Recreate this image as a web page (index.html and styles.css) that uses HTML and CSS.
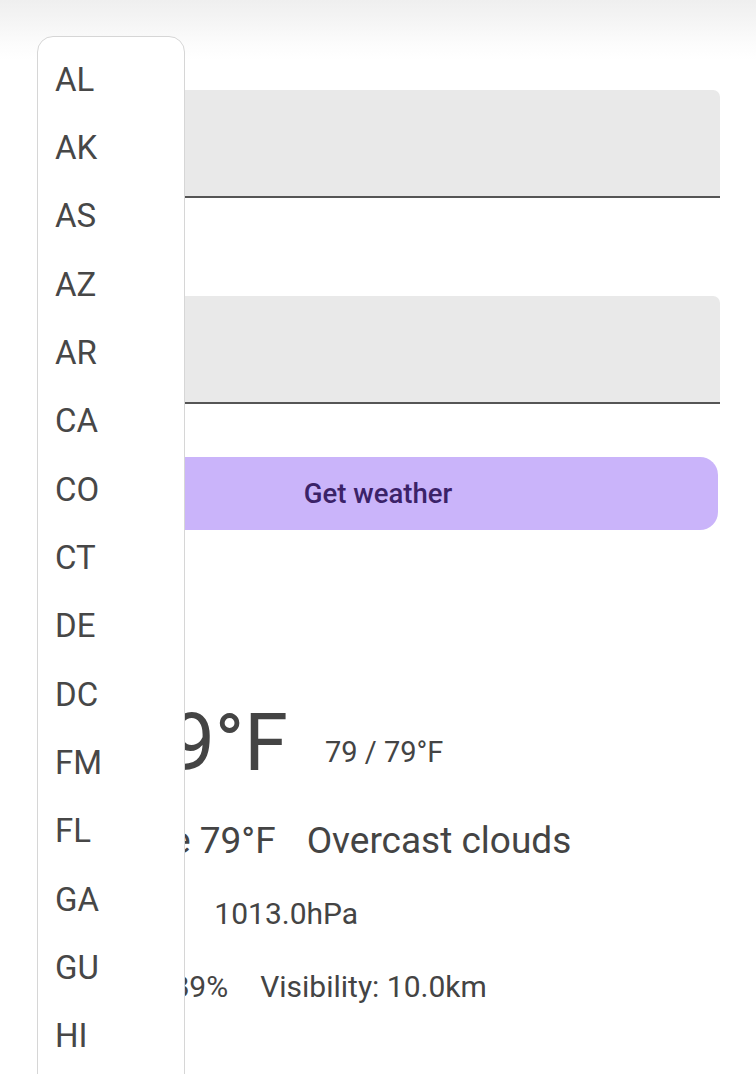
FILE: index.html
```html
<!DOCTYPE html>
<html>
<head>
<meta charset="utf-8">
<link rel="stylesheet" href="styles.css">
</head>
<body>
<div class="topglow"></div>
<main class="page">
  <div class="field"></div>
  <div class="field"></div>
  <button class="btn">Get weather</button>
  <section class="weather">
    <div class="temp-row">
      <svg class="wicon" width="80" height="60" viewBox="0 0 80 60"><path d="M20 50h40a14 14 0 0 0 0-28 20 20 0 0 0-38 4 12 12 0 0 0-2 24z" fill="#bbb"/></svg>
      <span class="temp">79°F</span>
      <span class="range">79 / 79°F</span>
    </div>
    <div class="feels-row">
      <span>Feels like 79°F</span>
      <span>Overcast clouds</span>
    </div>
    <div class="info-row info-row--wide">
      <span>Pressure:</span>
      <span>1013.0hPa</span>
    </div>
    <div class="info-row">
      <span>Humidity: 89%</span>
      <span>Visibility: 10.0km</span>
    </div>
  </section>
</main>
<ul class="menu">
  <li>AL</li><li>AK</li><li>AS</li><li>AZ</li><li>AR</li><li>CA</li><li>CO</li><li>CT</li><li>DE</li><li>DC</li><li>FM</li><li>FL</li><li>GA</li><li>GU</li><li>HI</li>
</ul>
</body>
</html>
```

FILE: styles.css
```css
html, body {
  margin: 0;
  padding: 0;
  background: #fff;
  height: 1074px;
  overflow: hidden;
  font-family: Roboto, "Liberation Sans", sans-serif;
  color: #444;
}
.topglow {
  position: absolute;
  left: 0;
  top: 0;
  width: 100%;
  height: 60px;
  background: linear-gradient(#efefef 0px, #f6f6f6 25px, #fcfcfc 45px, #fff 60px);
}
.page {
  position: relative;
  padding: 90px 36px 0 38px;
  display: flex;
  flex-direction: column;
}
.field {
  height: 106px;
  background: #e9e9e9;
  border-bottom: 2px solid #555;
  border-radius: 7px 7px 0 0;
  margin-bottom: 98px;
}
.field + .field {
  margin-bottom: 53px;
}
.btn {
  height: 73px;
  margin-right: 2px;
  border: none;
  border-radius: 18px;
  background: #cab4fa;
  color: #3b2268;
  font-family: Roboto, "Liberation Sans", sans-serif;
  font-weight: 500;
  font-size: 27.5px;
  padding: 0;
}
.weather {
  padding-top: 213px;
  display: flex;
  flex-direction: column;
}
.temp-row {
  display: flex;
  align-items: center;
  height: 0;
}
.wicon {
  margin-right: 8px;
}
.temp {
  font-size: 79px;
  line-height: 1;
}
.range {
  font-size: 29px;
  margin-left: 37px;
  margin-top: 18px;
}
.feels-row {
  margin-top: 78px;
  display: flex;
  gap: 31px;
  font-size: 37px;
  line-height: 40px;
}
.info-row {
  margin-top: 33px;
  display: flex;
  gap: 32px;
  font-size: 30px;
  line-height: 40px;
}
.info-row--wide {
  gap: 51px;
}
.menu {
  position: absolute;
  left: 37px;
  top: 36px;
  width: 146px;
  margin: 0;
  padding: 8px 0 0;
  list-style: none;
  background: #fff;
  border: 1.5px solid #d6d6d6;
  border-radius: 16px;
  height: 1100px;
}
.menu li {
  height: 68.33px;
  display: flex;
  align-items: center;
  padding-left: 17px;
  font-size: 33px;
  color: #474747;
}
```
